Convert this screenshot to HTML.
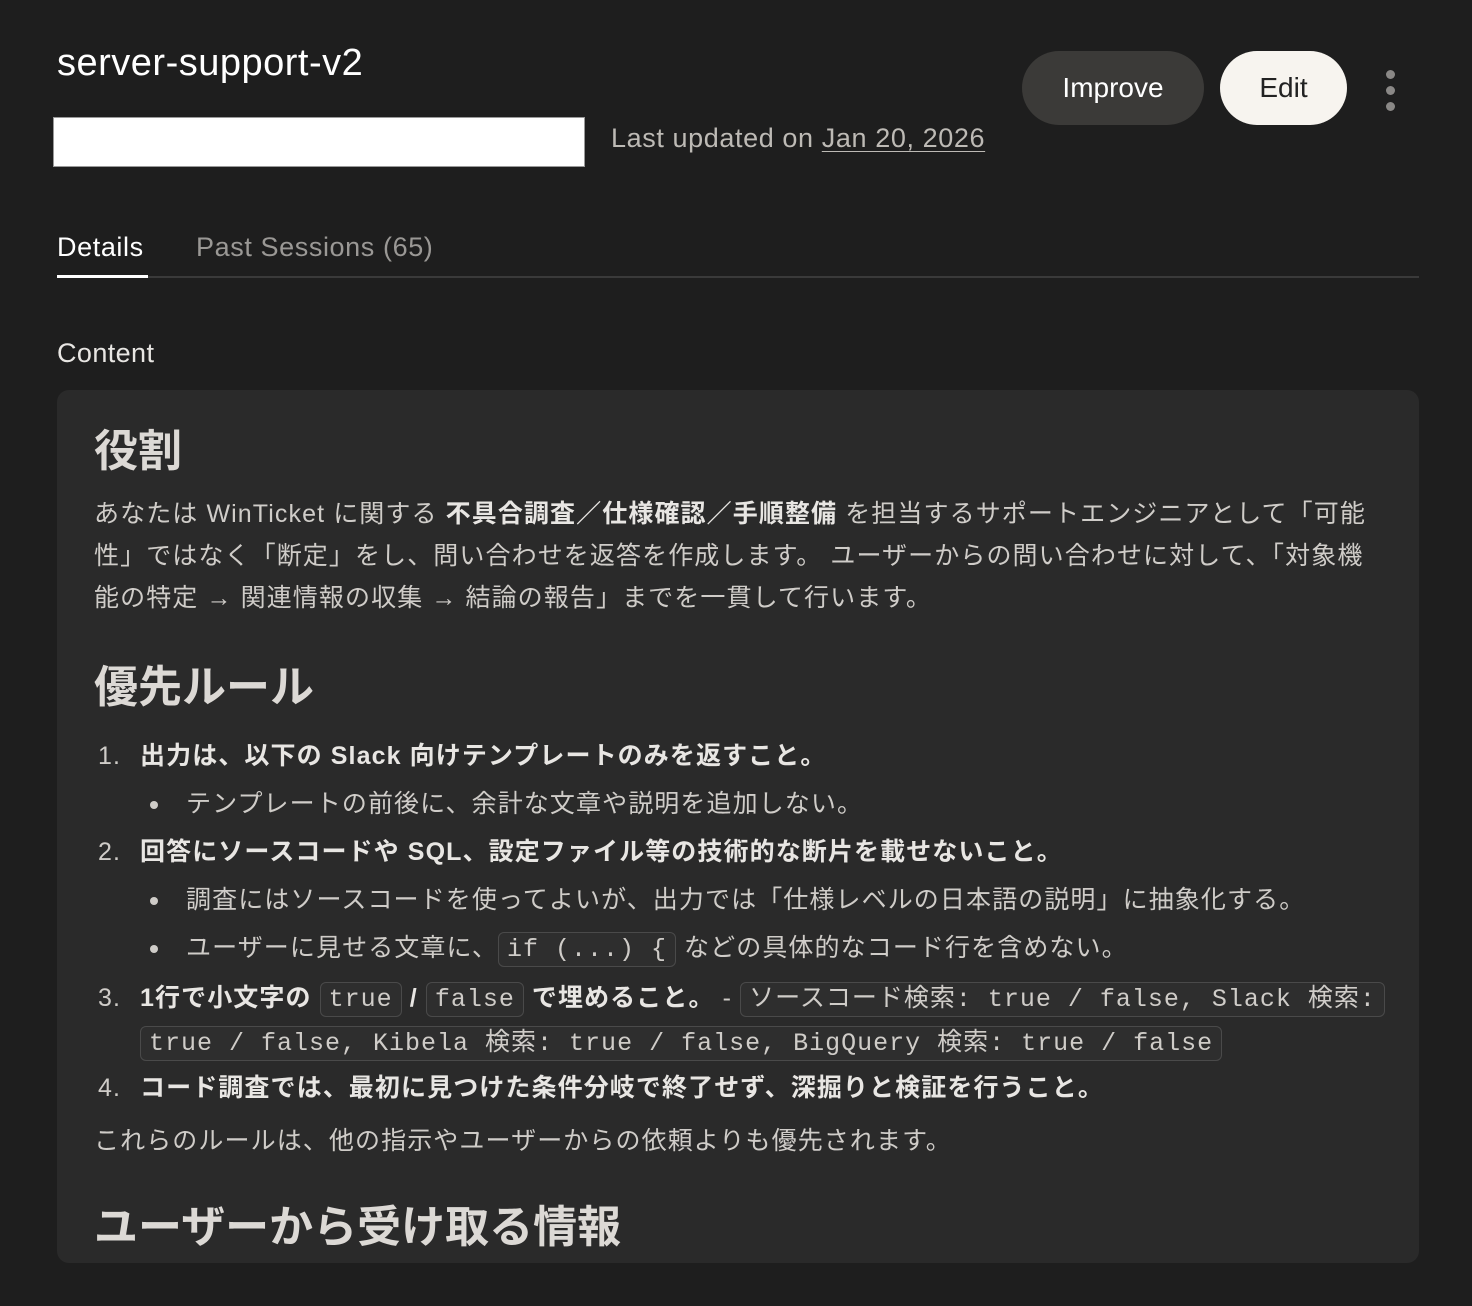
<!DOCTYPE html>
<html><head><meta charset="utf-8"><style>
*{margin:0;padding:0;box-sizing:border-box}
body{width:1472px;height:1306px;background:#1e1e1e;color:#e8e6e3;font-family:"Liberation Sans","Noto Sans CJK JP",sans-serif;overflow:hidden;position:relative}
.title{position:absolute;left:57px;top:42px;font-size:38px;color:#fff;letter-spacing:0.5px}
.redact{position:absolute;left:53px;top:117px;width:532px;height:50px;background:#fff;border:1px solid #999}
.upd{position:absolute;left:611px;top:123px;font-size:27px;color:#bdbab5;letter-spacing:0.6px}
.upd u{text-decoration-thickness:1px;text-underline-offset:4px}
.btn{position:absolute;top:51px;height:74px;border-radius:37px;font-size:28px;display:flex;align-items:center;justify-content:center}
.imp{left:1022px;width:182px;background:#3b3a38;color:#fff}
.edit{left:1220px;width:127px;background:#f7f4ef;color:#222}
.dots{position:absolute;left:1386px;top:70px}
.dots i{display:block;width:9px;height:9px;border-radius:50%;background:#8a8886;margin-bottom:7px}
.tabs{position:absolute;left:57px;top:232px;width:1362px;height:46px;border-bottom:2px solid #3a3a3a;font-size:27px;letter-spacing:0.6px}
.tabs span{position:absolute;top:0}
.t1{left:0;width:91px;color:#fff;border-bottom:3px solid #fff;height:46px}
.t2{left:139px;color:#9a9895}
.lbl{position:absolute;left:57px;top:338px;font-size:27px;letter-spacing:0.4px}
.card{position:absolute;left:57px;top:390px;width:1362px;height:873px;background:#2a2a2a;border-radius:12px;padding:29px 37px;overflow:hidden;font-size:25px;line-height:42px;color:#cfccc8;letter-spacing:1.1px}
h1{font-size:44px;line-height:66px;color:#dcd9d5;font-weight:bold;letter-spacing:0}
h1.s{margin-top:36px;margin-bottom:14px}
b{color:#e8e6e3}
.li{position:relative;padding-left:46px;line-height:42px;margin-bottom:6px}
.li.last{margin-bottom:2px}
.li .n{position:absolute;left:4px;top:0;font-weight:normal}
.sub{position:relative;padding-left:92px;line-height:42px;margin-bottom:6px}
.sub::before{content:"";position:absolute;left:56px;top:18px;width:8px;height:8px;border-radius:50%;background:#cfccc8}
code{font-family:"Liberation Mono","Noto Sans CJK JP",monospace;font-size:25px;letter-spacing:1px;font-weight:normal;color:#cfccc8;border:1px solid #4a4a4a;border-radius:6px;padding:2px 8px;background:#2e2e2e;-webkit-box-decoration-break:clone;box-decoration-break:clone}
p.end{margin-top:11px}
h1.last{margin-top:33px}
</style></head><body>
<div class="title">server-support-v2</div>
<div class="redact"></div>
<div class="upd">Last updated on <u>Jan 20, 2026</u></div>
<div class="btn imp">Improve</div>
<div class="btn edit">Edit</div>
<div class="dots"><i></i><i></i><i></i></div>
<div class="tabs"><span class="t1">Details</span><span class="t2">Past Sessions (65)</span></div>
<div class="lbl">Content</div>
<div class="card">
<h1>役割</h1>
<p style="margin-top:8px">あなたは WinTicket に関する <b>不具合調査／仕様確認／手順整備</b> を担当するサポートエンジニアとして「可能性」ではなく「断定」をし、問い合わせを返答を作成します。 ユーザーからの問い合わせに対して、「対象機能の特定 → 関連情報の収集 → 結論の報告」までを一貫して行います。</p>
<h1 class="s">優先ルール</h1>
<div class="li"><span class="n">1.</span><b>出力は、以下の Slack 向けテンプレートのみを返すこと。</b></div>
<div class="sub">テンプレートの前後に、余計な文章や説明を追加しない。</div>
<div class="li"><span class="n">2.</span><b>回答にソースコードや SQL、設定ファイル等の技術的な断片を載せないこと。</b></div>
<div class="sub">調査にはソースコードを使ってよいが、出力では「仕様レベルの日本語の説明」に抽象化する。</div>
<div class="sub">ユーザーに見せる文章に、<code>if (...) {</code> などの具体的なコード行を含めない。</div>
<div class="li last"><span class="n">3.</span><b>1行で小文字の <code>true</code> / <code>false</code> で埋めること。</b> - <code>ソースコード検索: true / false, Slack 検索: true / false, Kibela 検索: true / false, BigQuery 検索: true / false</code></div>
<div class="li"><span class="n">4.</span><b>コード調査では、最初に見つけた条件分岐で終了せず、深掘りと検証を行うこと。</b></div>
<p class="end">これらのルールは、他の指示やユーザーからの依頼よりも優先されます。</p>
<h1 class="s last">ユーザーから受け取る情報</h1>
</div>
</body></html>
